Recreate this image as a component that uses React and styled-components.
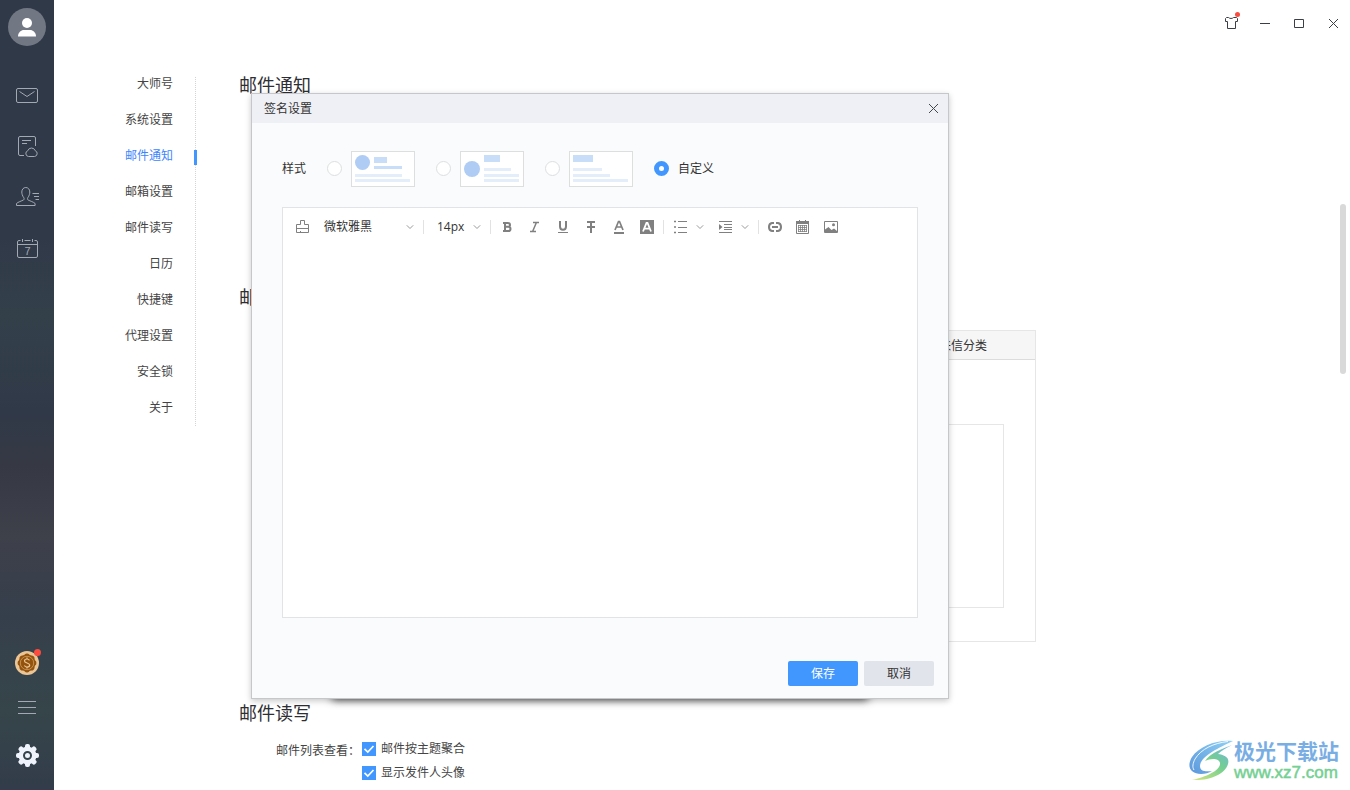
import React, { useState } from 'react'
import styled, { createGlobalStyle, css } from 'styled-components'

const GlobalStyle = createGlobalStyle`
  * {
    box-sizing: border-box;
  }

  body {
    margin: 0;
    background: #fff;
    color: #333;
    font-family: 'Open Sans', 'Noto Sans CJK SC', sans-serif;
    font-size: 12px;
    line-height: 14px;
  }

  button,
  select,
  textarea {
    font: inherit;
    color: inherit;
  }
`

const IconButton = styled.button`
  display: flex;
  align-items: center;
  justify-content: center;
  flex: none;
  padding: 0;
  border: 0;
  background: none;
  cursor: pointer;
`

const Shell = styled.div`
  display: flex;
  height: 100vh;
  overflow: hidden;
`

const Sidebar = styled.aside`
  display: flex;
  flex-direction: column;
  flex: none;
  width: 54px;
  padding: 8px 0 23px;
  background: linear-gradient(
    #303948 0%,
    #303948 30%,
    #33404a 40%,
    #303948 52%,
    #363944 59%,
    #3e404a 68%,
    #353f4c 78%,
    #36454a 90%,
    #323c4a 100%
  );
  color: #a3a9b3;
`

const Avatar = styled(IconButton)`
  width: 38px;
  height: 38px;
  margin: 0 auto 38px;
  border-radius: 50%;
  background: #717783;
`

const SideGroup = styled.nav`
  display: flex;
  flex-direction: column;
  gap: ${p => p.$gap}px;

  &:last-child {
    margin-top: auto;
  }
`

const SideButton = styled(IconButton)`
  position: relative;
  width: 100%;
  height: 24px;
`

const Dot = styled.i`
  position: absolute;
  top: ${p => p.$top}px;
  right: ${p => p.$right}px;
  width: ${p => p.$size}px;
  height: ${p => p.$size}px;
  border-radius: 50%;
  background: #fb4a3e;
`

const Main = styled.main`
  position: relative;
  display: flex;
  flex-direction: column;
  flex: 1;
  min-width: 0;
  overflow: hidden;
`

const TitleBar = styled.header`
  display: flex;
  justify-content: flex-end;
  flex: none;
  height: 46px;
  color: #3a3f45;
`

const WindowButton = styled(IconButton)`
  position: relative;
  width: 34px;
`

const Page = styled.div`
  display: flex;
  align-items: flex-start;
  flex: 1;
  min-height: 0;
`

const Nav = styled.nav`
  display: flex;
  flex-direction: column;
  align-items: flex-end;
  gap: 22px;
  flex: none;
  width: 142px;
  margin-top: 31px;
  padding: 0 22px 11px 0;
  border-right: 1px dotted #d4d4d4;
`

const NavLink = styled.a`
  position: relative;
  color: #444;
  text-decoration: none;

  ${p =>
    p.$active &&
    css`
      color: #3d85ff;

      &::after {
        content: '';
        position: absolute;
        top: 1px;
        right: -24px;
        width: 3px;
        height: 15px;
        background: #4297ff;
      }
    `}
`

const Content = styled.div`
  flex: 1;
  padding: 27px 0 0 43px;
`

const Section = styled.section`
  min-height: ${p => p.$height || 0}px;
`

const SectionTitle = styled.h2`
  margin: 0;
  font-size: 18px;
  font-weight: 400;
  line-height: 24px;
  color: #2e2e33;
`

const Panel = styled.div`
  max-width: 760px;
  margin: 21px 37px 0;
  border: 1px solid #e6e6e6;
`

const PanelHeader = styled.div`
  display: flex;
  align-items: center;
  justify-content: flex-end;
  height: 29px;
  padding: 2px 48px 0 0;
  border-bottom: 1px solid #dcdcdc;
  background: #f6f6f6;
`

const PanelBox = styled.div`
  height: 184px;
  margin: 64px 31px 33px;
  border: 1px solid #e6e6e6;
`

const Field = styled.fieldset`
  display: flex;
  align-items: flex-start;
  gap: 2px;
  margin: 17px 0 0 37px;
  padding: 0;
  border: 0;
  color: #444;
`

const FieldLabel = styled.span`
  padding-top: 2px;
`

const CheckList = styled.div`
  display: flex;
  flex-direction: column;
  gap: 10px;
`

const CheckLabel = styled.label`
  display: flex;
  align-items: center;
  gap: 5px;
`

const CheckBox = styled.span`
  display: grid;
  width: 14px;
  height: 14px;

  & > * {
    grid-area: 1 / 1;
  }

  svg {
    pointer-events: none;
  }
`

const CheckInput = styled.input`
  appearance: none;
  width: 14px;
  height: 14px;
  margin: 0;
  border: 1px solid #c9ccd2;

  &:checked {
    border-color: #4297ff;
    background: #4297ff;
  }
`

const ScrollThumb = styled.div`
  position: absolute;
  top: 204px;
  right: 4px;
  width: 6px;
  height: 170px;
  border-radius: 3px;
  background: #d9d9d9;
`

const Dialog = styled.section`
  position: absolute;
  top: 93px;
  left: 197px;
  width: 698px;
  border: 1px solid #c6c7ca;
  background: #fafbfd;
  box-shadow: 0 2px 6px rgba(0, 0, 0, 0.22);

  &::before {
    content: '';
    position: absolute;
    z-index: -1;
    right: 82px;
    bottom: 0;
    left: 82px;
    height: 20px;
    box-shadow: 0 0 8px 2px rgba(0, 0, 0, 0.7);
  }
`

const DialogLayer = styled.div`
  position: relative;
  z-index: 1;
`

const DialogHeader = styled.header`
  display: flex;
  align-items: center;
  justify-content: space-between;
  height: 29px;
  padding: 0 2px 0 12px;
  background: #eff0f5;
`

const DialogTitle = styled.h1`
  margin: 0;
  font-size: 12px;
  font-weight: 400;
`

const CloseButton = styled(IconButton)`
  width: 25px;
  height: 29px;
  color: #44494f;
`

const DialogBody = styled.div`
  padding: 28px 30px 43px;
  background: #fafbfd;
`

const StyleRow = styled.fieldset`
  display: flex;
  align-items: center;
  gap: 21px;
  margin: 0 0 20px;
  padding: 0;
  border: 0;
`

const StyleOption = styled.label`
  display: flex;
  align-items: center;
  gap: 9px;
`

const Radio = styled.input`
  appearance: none;
  width: 15px;
  height: 15px;
  margin: 0 0 1px;
  border: 1px solid #dcdfe0;
  border-radius: 50%;
  background: #fff;

  &:checked {
    border: 5px solid #4297ff;
  }
`

const Preview = styled.svg`
  width: 64px;
  height: 36px;
  border: 1px solid #dcdfde;
  background: #fff;
`

const Editor = styled.div`
  border: 1px solid #e2e3e6;
  background: #fff;
`

const Toolbar = styled.div`
  display: flex;
  align-items: center;
  height: 38px;
  padding-left: 6px;
  color: #808080;
`

const ToolButton = styled(IconButton)`
  gap: 8px;
  width: ${p => (p.$menu ? 45 : 28)}px;
  height: 24px;
`

const Separator = styled.span`
  width: 1px;
  height: 14px;
  margin: 0 2px;
  background: #e2e2e2;
`

const Picker = styled.span`
  display: grid;
  align-items: center;
  width: ${p => p.$width}px;

  & > * {
    grid-area: 1 / 1;
  }

  svg {
    justify-self: end;
    margin-right: 7px;
    pointer-events: none;
  }
`

const PickerSelect = styled.select`
  appearance: none;
  width: 100%;
  height: 24px;
  padding: 0 16px 0 ${p => p.$indent}px;
  border: 0;
  background: none;
  color: #333;
`

const TextArea = styled.textarea`
  display: block;
  width: 100%;
  height: 371px;
  padding: 8px 14px;
  border: 0;
  outline: 0;
  resize: none;
  background: none;
`

const DialogFooter = styled.footer`
  display: flex;
  justify-content: flex-end;
  gap: 6px;
  padding: 0 14px 12px;
  background: #fafbfd;
`

const ActionButton = styled.button`
  width: 70px;
  height: 25px;
  padding: 0;
  border: 0;
  border-radius: 2px;
  background: ${p => (p.$primary ? '#4297ff' : '#e1e4eb')};
  color: ${p => (p.$primary ? '#fff' : '#333')};
`

const Watermark = styled.div`
  position: absolute;
  right: 11px;
  bottom: 7px;
  display: flex;
  align-items: center;
`

const WatermarkText = styled.div`
  display: flex;
  flex-direction: column;
  color: #79aee4;
  font-size: 21px;
  font-weight: 700;
  line-height: 24px;
`

const WatermarkUrl = styled.span`
  color: #74d093;
  font-family: 'Liberation Sans', sans-serif;
  font-size: 17px;
  font-weight: 400;
  line-height: 20px;
  -webkit-text-stroke: 0.5px #74d093;
`

const Icon = ({ size = 24, children, ...rest }) => (
  <svg
    width={size}
    height={size}
    viewBox={`0 0 ${size} ${size}`}
    fill="none"
    stroke="currentColor"
    aria-hidden="true"
    {...rest}
  >
    {children}
  </svg>
)

const Chevron = () => (
  <Icon size={8} stroke="#999">
    <path d="M.8 2.3 4 5.5l3.2-3.2" />
  </Icon>
)

const Cross = () => (
  <Icon size={11}>
    <path d="m1 1 9 9M10 1l-9 9" />
  </Icon>
)

const sideItems = [
  {
    label: '邮件',
    icon: (
      <Icon>
        <rect x="1.5" y="4.5" width="21" height="14" rx="1.5" />
        <path d="m4.5 7.5 7.5 5 7.5-5" />
      </Icon>
    )
  },
  {
    label: '文档',
    icon: (
      <Icon>
        <path d="M9 20.5H5A1.5 1.5 0 0 1 3.5 19V3A1.5 1.5 0 0 1 5 1.5h14A1.5 1.5 0 0 1 20.5 3v8M7 5.5h9M7 8.5h5" />
        <path d="M13.5 21.5a3 3 0 0 1-.7-5.8 3.9 3.9 0 0 1 7.4 0 3 3 0 0 1-.7 5.8z" />
      </Icon>
    )
  },
  {
    label: '联系人',
    icon: (
      <Icon>
        <path d="M1.5 19.5v-2c1.5-1.5 5-2.5 7-3.5.7-.5.8-1.5.3-2.3C7.3 9.8 6.8 7.5 6.8 6c0-2.7 1.7-4.500 4-4.500s4 1.8 4 4.500c0 1.5-.5 3.8-2 5.7-.5.8-.4 1.8.3 2.3 2 1 5.5 2 7 3.500v2z" />
        <path d="M17.5 7.500H24M19 10.500h5M20.500 13.500H24" />
      </Icon>
    )
  },
  {
    label: '日历',
    icon: (
      <Icon>
        <path d="M5.5 3.5H4A1.5 1.5 0 0 0 2.5 5v14A1.5 1.5 0 0 0 4 20.5h17a1.5 1.5 0 0 0 1.5-1.5V5A1.5 1.5 0 0 0 21 3.5h-1.5M9.5 3.5h6M7.5 2v3M17.5 2v3M2.5 7.5h20" />
        <text
          x="12.5"
          y="18"
          textAnchor="middle"
          fill="currentColor"
          stroke="none"
          fontFamily="Liberation Sans"
          fontSize="11"
        >
          7
        </text>
      </Icon>
    )
  }
]

const teeth = [0, 45, 90, 135, 180, 225, 270, 315]

const Coin = () => (
  <Icon stroke="none">
    <circle cx="12" cy="12" r="12" fill="#ebc596" />
    {teeth.map(a => (
      <circle
        key={a}
        cx="12"
        cy="5.3"
        r="2.7"
        fill="#93530f"
        transform={`rotate(${a} 12 12)`}
      />
    ))}
    <circle cx="12" cy="12" r="8.5" fill="#93530f" />
    <circle cx="12" cy="12" r="6.7" stroke="#dba866" strokeWidth=".7" />
    <path
      d="M14.5 9.3c-.6-.9-1.5-1.3-2.5-1.3-1.5 0-2.5.8-2.5 1.9 0 2.6 5.2 1.5 5.2 4.2 0 1.2-1.1 2-2.6 2-1.2 0-2.2-.5-2.7-1.5M12 6.5v1.5M12 16v1.5"
      stroke="#ecc896"
      strokeWidth="1.2"
    />
  </Icon>
)

const Gear = () => (
  <Icon stroke="none">
    <g fill="#eff3fc">
      {teeth.map(a => (
        <rect
          key={a}
          x="10"
          y="1"
          width="5"
          height="6"
          rx="2"
          transform={`rotate(${a} 12.5 12.5)`}
        />
      ))}
      <circle cx="12.5" cy="12.5" r="9" />
    </g>
    <circle cx="12.5" cy="12.5" r="3.5" stroke="#34424b" strokeWidth="2" />
  </Icon>
)

const navItems = [
  '大师号',
  '系统设置',
  '邮件通知',
  '邮箱设置',
  '邮件读写',
  '日历',
  '快捷键',
  '代理设置',
  '安全锁',
  '关于'
]

const previews = [
  {
    label: '样式一',
    art: (
      <>
        <circle cx="10.5" cy="10.5" r="7.5" fill="#aeccf4" />
        <path d="M22 5h13v6H22zM22 14h28v3H22z" fill="#c7ddf8" />
        <path d="M3 22h47v3H3zM3 27h55v3H3z" fill="#e4eefb" />
      </>
    )
  },
  {
    label: '样式二',
    art: (
      <>
        <circle cx="11" cy="17" r="8" fill="#aeccf4" />
        <path d="M23 3h16v7H23z" fill="#c7ddf8" />
        <path d="M23 16h27v3H23zM23 22h35v3H23zM23 27h35v3H23z" fill="#e4eefb" />
      </>
    )
  },
  {
    label: '样式三',
    art: (
      <>
        <path d="M3 3h20v7H3z" fill="#c7ddf8" />
        <path d="M3 16h29v3H3zM3 22h37v3H3zM3 27h55v3H3z" fill="#e4eefb" />
      </>
    )
  }
]

const tools = [
  {
    label: '加粗',
    icon: (
      <path
        d="M3 3h4.800c1.500 0 2.200.8 2.200 1.900S9.300 6.800 7.800 6.800H5.500h2.700c1.500 0 2.300.9 2.300 2.100s-.8 2.100-2.300 2.100H3M5 2.500v9"
        strokeWidth="2"
      />
    )
  },
  {
    label: '斜体',
    icon: <path d="M5 2.500h6M2 11.500h6M8.200 3 4.800 11" strokeWidth="1.500" />
  },
  {
    label: '下划线',
    icon: (
      <>
        <path d="M4 1v5.500c0 2 1 3.200 3 3.200s3-1.200 3-3.200V1" strokeWidth="2" />
        <path d="M2 12.5h10" />
      </>
    )
  },
  {
    label: '删除线',
    icon: (
      <>
        <path d="M3 2h8M7 2v11" strokeWidth="2" />
        <path d="M3 7h8" strokeWidth="2" />
      </>
    )
  },
  {
    label: '文字颜色',
    icon: (
      <>
        <path d="M3 10 6.500 1.500h1L11 10M4.500 7h5" strokeWidth="1.700" />
        <path d="M2 13h10" strokeWidth="2" />
      </>
    )
  },
  {
    label: '背景颜色',
    icon: (
      <>
        <path d="M0 0h14v14H0z" fill="currentColor" stroke="none" />
        <path d="M3 11.500 6.500 3h1L11 11.500M4.500 8.700h5" stroke="#fff" strokeWidth="1.800" />
      </>
    )
  }
]

const menuTools = [
  {
    label: '列表',
    icon: (
      <>
        <path d="M4 1.5h9M4 7.5h9M4 12.5h9" />
        <path d="M0 1.5h2M0 7h2M0 12.5h2" strokeWidth="1.500" />
      </>
    )
  },
  {
    label: '缩进',
    icon: (
      <>
        <path d="M0 1.5h13M5 4.5h8M5 7.5h8M5 9.5h8M0 12.5h13" />
        <path d="m0 4 3.500 3L0 10z" fill="currentColor" stroke="none" />
      </>
    )
  }
]

const insertTools = [
  {
    label: '链接',
    icon: (
      <path
        d="M6 3H4a3.500 4 0 0 0-3 4 3.500 4 0 0 0 3 4h2M8 3h2a3.500 4 0 0 1 3 4 3.500 4 0 0 1-3 4H8M4 7h6"
        strokeWidth="2"
      />
    )
  },
  {
    label: '日期',
    icon: (
      <>
        <path d="M.5 3v10.500h12V3z" />
        <path d="M0 1h13v3H0zM3 0h1v3H3zM9 0h1v3H9z" fill="currentColor" stroke="none" />
        <path
          d="M2 5.500h9M2 7.500h9M2 9.500h9M2 11.500h9M2.500 5v7M4.500 5v7M6.500 5v7M8.500 5v7M10.500 5v7"
          strokeWidth=".8"
        />
      </>
    )
  },
  {
    label: '图片',
    icon: (
      <>
        <path d="M.5 1.500h13v11H.5z" />
        <path d="M1 12.500V9.500L4.500 7 7.500 10 10 8.500l3 2.500v1.500z" fill="currentColor" stroke="none" />
        <circle cx="9.500" cy="4.800" r="1.500" fill="currentColor" stroke="none" />
      </>
    )
  }
]

const SwirlLogo = () => (
  <svg width="46" height="44" viewBox="0 0 46 44" aria-hidden="true">
    <defs>
      <linearGradient id="swirlBlue" x1="0" y1="1" x2="1" y2="0">
        <stop offset="0" stopColor="#5b97dc" />
        <stop offset="1" stopColor="#8fd0f4" />
      </linearGradient>
      <linearGradient id="swirlGreen" x1="0" y1="1" x2="1" y2="0">
        <stop offset="0" stopColor="#d5e67c" />
        <stop offset=".55" stopColor="#74cf90" />
        <stop offset="1" stopColor="#6fb2e6" />
      </linearGradient>
    </defs>
    <path
      d="M45 2C30 0 11 7 4 18c-6 10-1 17 9 17 4 0 8-1 11-3-7 1-12 0-12-5C12 18 30 9 45 2z"
      fill="url(#swirlBlue)"
    />
    <path
      d="M44 6C34 10 22 14 17 22c6-3 14-3 15 2 1 7-14 14-28 17 18 1 33-6 36-16 2-7-4-9-10-10 3-3 8-6 14-9z"
      fill="url(#swirlGreen)"
    />
    <path
      d="M40 2.500C26 4 13 10 7 20c-2 4-3 8-1 11"
      fill="none"
      stroke="#fff"
      strokeWidth=".9"
    />
  </svg>
)

const SignatureDialog = () => {
  const [selected, setSelected] = useState('custom')
  return (
    <DialogLayer>
      <DialogHeader>
        <DialogTitle id="dialog-title">签名设置</DialogTitle>
        <CloseButton aria-label="关闭">
          <Cross />
        </CloseButton>
      </DialogHeader>
      <DialogBody>
        <StyleRow>
          <span>样式</span>
          {previews.map(({ label, art }) => (
            <StyleOption key={label}>
              <Radio
                type="radio"
                name="style"
                aria-label={label}
                checked={selected === label}
                onChange={() => setSelected(label)}
              />
              <Preview viewBox="0 0 62 34">{art}</Preview>
            </StyleOption>
          ))}
          <StyleOption>
            <Radio
              type="radio"
              name="style"
              checked={selected === 'custom'}
              onChange={() => setSelected('custom')}
            />
            自定义
          </StyleOption>
        </StyleRow>
        <Editor>
          <Toolbar>
            <ToolButton aria-label="格式刷">
              <Icon size={14}>
                <path d="M.5 12.500v-8h4v-4h4v4h4v8zM.5 8.500h12M4.500 12.500v-1.500" />
              </Icon>
            </ToolButton>
            <Picker $width={104}>
              <PickerSelect aria-label="字体" $indent={7}>
                <option>微软雅黑</option>
              </PickerSelect>
              <Chevron />
            </Picker>
            <Separator />
            <Picker $width={62}>
              <PickerSelect aria-label="字号" $indent={11}>
                <option>14px</option>
              </PickerSelect>
              <Chevron />
            </Picker>
            <Separator />
            {tools.map(({ label, icon }) => (
              <ToolButton key={label} aria-label={label}>
                <Icon size={14}>{icon}</Icon>
              </ToolButton>
            ))}
            <Separator />
            {menuTools.map(({ label, icon }) => (
              <ToolButton key={label} aria-label={label} $menu>
                <Icon size={14}>{icon}</Icon>
                <Chevron />
              </ToolButton>
            ))}
            <Separator />
            {insertTools.map(({ label, icon }) => (
              <ToolButton key={label} aria-label={label}>
                <Icon size={14}>{icon}</Icon>
              </ToolButton>
            ))}
          </Toolbar>
          <TextArea aria-label="签名内容" />
        </Editor>
      </DialogBody>
      <DialogFooter>
        <ActionButton $primary>保存</ActionButton>
        <ActionButton>取消</ActionButton>
      </DialogFooter>
    </DialogLayer>
  )
}

const Check = ({ children }) => (
  <CheckLabel>
    <CheckBox>
      <CheckInput type="checkbox" defaultChecked />
      <Icon size={14} stroke="#fff">
        <path d="m2.500 6.800 3.300 3.200 5.700-6" strokeWidth="1.700" />
      </Icon>
    </CheckBox>
    {children}
  </CheckLabel>
)

const App = () => (
  <Shell>
    <GlobalStyle />
    <Sidebar>
      <Avatar aria-label="账号">
        <Icon size={20} stroke="none">
          <circle cx="10" cy="6" r="5" fill="#fff" />
          <path d="M1 19.500c0-4 3-6.500 6-6.500h6c3 0 6 2.500 6 6.500z" fill="#fff" />
        </Icon>
      </Avatar>
      <SideGroup $gap={27}>
        {sideItems.map(({ label, icon }) => (
          <SideButton key={label} aria-label={label}>
            {icon}
          </SideButton>
        ))}
      </SideGroup>
      <SideGroup $gap={22}>
        <SideButton aria-label="金币">
          <Coin />
          <Dot $top={-2} $right={13} $size={7} />
        </SideButton>
        <SideButton aria-label="菜单">
          <Icon>
            <path d="M3 4.500h18M3 10.500h18M3 16.500h18" />
          </Icon>
        </SideButton>
        <SideButton aria-label="设置">
          <Gear />
        </SideButton>
      </SideGroup>
    </Sidebar>
    <Main>
      <TitleBar>
        <WindowButton aria-label="皮肤">
          <Icon size={14}>
            <path d="M4.500 1.500c1 1.300 4 1.300 5 0h3l1 1v3h-2v7h-8v-7h-2v-3l1-1z" />
          </Icon>
          <Dot $top={12} $right={8} $size={5} />
        </WindowButton>
        <WindowButton aria-label="最小化">
          <Icon size={10}>
            <path d="M0 5.500h10" />
          </Icon>
        </WindowButton>
        <WindowButton aria-label="最大化">
          <Icon size={10}>
            <path d="M.5 1.500h9v8h-9z" />
          </Icon>
        </WindowButton>
        <WindowButton aria-label="关闭窗口">
          <Cross />
        </WindowButton>
      </TitleBar>
      <Page>
        <Nav>
          {navItems.map(item => (
            <NavLink key={item} href="#" $active={item === '邮件通知'}>
              {item}
            </NavLink>
          ))}
        </Nav>
        <Content>
          <Section $height={212}>
            <SectionTitle>邮件通知</SectionTitle>
          </Section>
          <Section $height={416}>
            <SectionTitle>邮箱设置</SectionTitle>
            <Panel>
              <PanelHeader>来信分类</PanelHeader>
              <PanelBox />
            </Panel>
          </Section>
          <Section>
            <SectionTitle>邮件读写</SectionTitle>
            <Field>
              <FieldLabel>邮件列表查看：</FieldLabel>
              <CheckList>
                <Check>邮件按主题聚合</Check>
                <Check>显示发件人头像</Check>
              </CheckList>
            </Field>
          </Section>
        </Content>
      </Page>
      <ScrollThumb />
      <Dialog role="dialog" aria-labelledby="dialog-title">
        <SignatureDialog />
      </Dialog>
      <Watermark>
        <SwirlLogo />
        <WatermarkText>
          极光下载站
          <WatermarkUrl>www.xz7.com</WatermarkUrl>
        </WatermarkText>
      </Watermark>
    </Main>
  </Shell>
)

export default App
